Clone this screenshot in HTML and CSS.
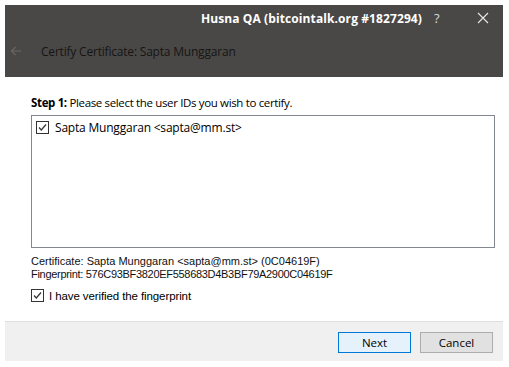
FILE: index.html
```html
<!DOCTYPE html>
<html lang="en">
<head>
  <meta charset="UTF-8">
  <title>Certify Certificate</title>
  <link rel="stylesheet" href="styles.css">
</head>
<body>
  <div class="dialog">
    <header class="dialog-header">
      <div class="title-bar">
        <span class="window-title">Husna QA (bitcointalk.org #1827294)</span>
        <span class="help-btn">?</span>
        <span class="close-btn">
          <svg width="12" height="12" viewBox="0 0 12 12"><path d="M1 1L11 11M11 1L1 11" stroke="#e8e8e8" stroke-width="1.1" fill="none"/></svg>
        </span>
      </div>
      <div class="wizard-bar">
        <span class="back-arrow">
          <svg width="12" height="10" viewBox="0 0 12 10"><path d="M11 5H1.5M5.5 1L1.5 5L5.5 9" stroke="#6a6866" stroke-width="1.1" fill="none"/></svg>
        </span>
        <span class="wizard-title">Certify Certificate: Sapta Munggaran</span>
      </div>
    </header>

    <main class="dialog-body">
      <p class="step"><strong>Step 1:</strong> Please select the user IDs you wish to certify.</p>
      <div class="uid-list">
        <label class="uid-item">
          <span class="check"><svg width="11" height="11" viewBox="0 0 11 11"><path d="M2 5.5L4.3 8L9 2.5" stroke="#333" stroke-width="1.2" fill="none"/></svg></span>
          Sapta Munggaran &lt;sapta@mm.st&gt;
        </label>
      </div>
      <div class="cert-info">
        <div>Certificate: Sapta Munggaran &lt;sapta@mm.st&gt; (0C04619F)</div>
        <div class="fingerprint">Fingerprint: 576C93BF3820EF558683D4B3BF79A2900C04619F</div>
      </div>
      <label class="verify">
        <span class="check"><svg width="11" height="11" viewBox="0 0 11 11"><path d="M2 5.5L4.3 8L9 2.5" stroke="#333" stroke-width="1.2" fill="none"/></svg></span>
        I have verified the fingerprint
      </label>
    </main>

    <footer class="dialog-footer">
      <button class="btn btn-default">Next</button>
      <button class="btn">Cancel</button>
    </footer>
  </div>
</body>
</html>
```

FILE: styles.css
```css
* {
  margin: 0;
  padding: 0;
  box-sizing: border-box;
}

body {
  background: #ffffff;
  padding: 5px 6px 6px 5px;
  font-family: 'Open Sans', 'Noto Sans', sans-serif;
  color: #000;
}

.dialog {
  width: 498px;
  background: #ffffff;
}

.dialog-header {
  background: #4a4846;
  height: 72px;
}

.title-bar {
  display: flex;
  align-items: center;
  justify-content: flex-end;
  height: 26px;
  padding-right: 14px;
}

.window-title {
  color: #ffffff;
  font-weight: 700;
  font-size: 12px;
  letter-spacing: 0.1px;
}

.help-btn {
  color: #d8d8d8;
  font-size: 13px;
  margin-left: 12px;
  width: 20px;
}

.close-btn {
  display: flex;
  margin-left: 23px;
}

.wizard-bar {
  display: flex;
  align-items: center;
  height: 40px;
  padding-left: 5px;
}

.back-arrow {
  display: flex;
  width: 31px;
}

.wizard-title {
  color: #151515;
  font-size: 12px;
  letter-spacing: -0.2px;
}

.dialog-body {
  padding: 18px 8px 0 26px;
  height: 244px;
}

.step {
  font-size: 11.5px;
  letter-spacing: -0.35px;
  margin-bottom: 5px;
}

.uid-list {
  border: 1px solid #828790;
  height: 133px;
  padding: 3px 4px;
}

.uid-item,
.verify {
  display: flex;
  align-items: center;
  gap: 6px;
  font-size: 12px;
  letter-spacing: -0.2px;
}

.check {
  display: flex;
  align-items: center;
  justify-content: center;
  width: 13px;
  height: 13px;
  border: 1px solid #333;
  background: #fff;
}

.cert-info {
  margin-top: 7px;
  font-family: 'Liberation Sans', Arial, sans-serif;
  font-size: 11px;
  line-height: 13px;
  color: #111;
}

.fingerprint {
  letter-spacing: -0.3px;
}

.verify {
  margin-top: 8px;
  font-family: 'Liberation Sans', Arial, sans-serif;
  font-size: 11.5px;
  letter-spacing: -0.1px;
  gap: 5px;
}

.dialog-footer {
  display: flex;
  justify-content: flex-end;
  gap: 9px;
  height: 40px;
  padding: 10px 10px 0 0;
  background: #f0f0f0;
  border-top: 1px solid #dfdfdf;
}

.btn {
  width: 73px;
  height: 21px;
  font-family: 'Open Sans', 'Noto Sans', sans-serif;
  font-size: 11.5px;
  background: #e1e1e1;
  border: 1px solid #adadad;
  color: #000;
}

.btn-default {
  background: #e5f1fb;
  border-color: #0078d7;
}
```
